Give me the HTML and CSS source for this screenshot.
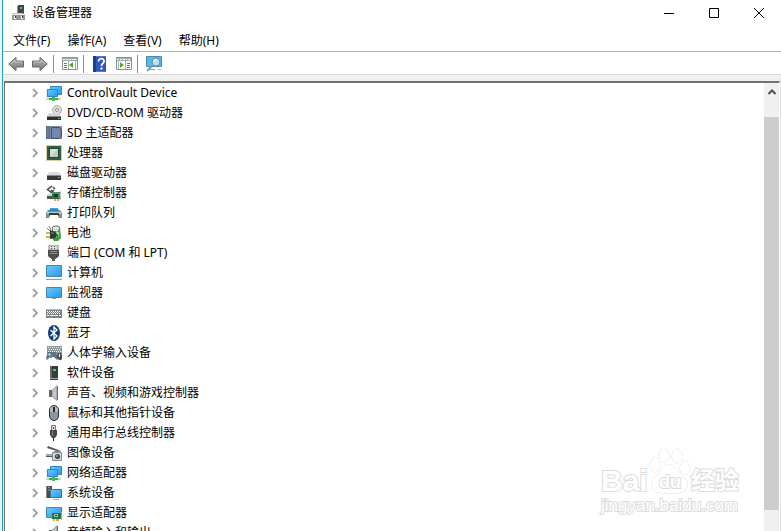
FILE: index.html
```html
<!DOCTYPE html>
<html lang="zh-CN">
<head>
    <meta charset="UTF-8">
    <meta name="viewport" content="width=device-width, initial-scale=1.0">
    <title>设备管理器</title>
    <link rel="stylesheet" href="styles.css">
</head>
<body>
    <!-- Device icons -->
    <svg class="sprite" aria-hidden="true">
        <defs>
            <linearGradient id="blue" x1="0" y1="0" x2="1" y2="1">
                <stop offset="0" stop-color="#6cc8fb"/>
                <stop offset="1" stop-color="#239af0"/>
            </linearGradient>
            <linearGradient id="arrow" x1="0" y1="0" x2="0" y2="1">
                <stop offset="0" stop-color="#b5b5b5"/>
                <stop offset="1" stop-color="#777"/>
            </linearGradient>
        </defs>
        <symbol id="network" viewBox="0 0 16 16">
            <path d="M4.500 1.500h11v8h-11z" fill="url(#blue)" stroke="#2f86c0"/>
            <path d="M.5 4.500h11v8H.5z" fill="url(#blue)" stroke="#e8f5ff"/>
            <path d="M1.500 4.500h10v7h-10z" fill="url(#blue)" stroke="#2f86c0"/>
            <path d="M0 13h15v2H0z" fill="#c4d6c4"/>
            <path d="M3 13h9v2H3z" fill="#36ad40"/>
            <path d="M6 12h3v4H6z" fill="#45b74c"/>
        </symbol>
        <symbol id="disc" viewBox="0 0 16 16">
            <circle cx="11" cy="5" r="4.500" fill="#ddd" stroke="#aaa"/>
            <circle cx="11" cy="5" r="1.500" fill="#fff" stroke="#888"/>
            <path d="M3 8h10l2 3H1z" fill="#d6d6d6"/>
            <path d="M1 11h14v4H1z" fill="#303030"/>
            <path d="M1 11h14v1H1z" fill="#888"/>
            <path d="M12 13h2v1h-2z" fill="#31d94b"/>
        </symbol>
        <symbol id="sd" viewBox="0 0 16 16">
            <path d="M0 1h16v13H0z" fill="#7c8daa"/>
            <path d="M0 1h4v13H0z" fill="#5c6c88"/>
            <path d="M1 3h2M1 5h2M1 7h2M1 9h2M1 11h2" stroke="#7d8ba5"/>
            <path d="M5.500 2.500h8l2 2v7l-2 2h-8z" fill="#6d82a7" stroke="#425370"/>
            <path d="M6 3h7v9H6z" fill="#7488ac"/>
        </symbol>
        <symbol id="cpu" viewBox="0 0 16 16">
            <path d="M.5.5h15v15H.5z" fill="#fff" stroke="#b59c48" stroke-dasharray="1 1"/>
            <path d="M1 1h14v14H1z" fill="#315f45"/>
            <path d="M3 3h10v10H3z" fill="#20472f"/>
            <path d="M4 4h8v8H4z" fill="#dcdedb"/>
            <path d="M4 12l8-8v8z" fill="#c3c8c2"/>
        </symbol>
        <symbol id="disk" viewBox="0 0 16 16">
            <path d="M3 7h10l2 4H1z" fill="#dadada"/>
            <path d="M1 10h14v5H1z" fill="#363636"/>
            <path d="M1 10h14v1H1z" fill="#898989"/>
            <path d="M12 12h2v1h-2z" fill="#2ed64b"/>
        </symbol>
        <symbol id="storage" viewBox="0 0 16 16">
            <path d="M6 1L1.500 4.500 6 8M7 2l2 2M5 5l3 3M8 5L6 7" fill="none" stroke="#444" stroke-width="1.500"/>
            <path d="M1 10l4-2 3 2v3H1z" fill="#d1d1d1"/>
            <path d="M1 11h6v3H1z" fill="#505050"/>
            <path d="M6 7h9v7H6z" fill="#247548"/>
            <path d="M8 9h4v3H8z" fill="#163625"/>
            <path d="M6 8h8M13 9v4" stroke="#70b989"/>
            <path d="M14.500 6v9" stroke="#b7b7b7"/>
            <path d="M8 14h2v2H8zM11 14h2v2h-2z" fill="#f0a22c"/>
        </symbol>
        <symbol id="printer" viewBox="0 0 16 16">
            <path d="M4 3h8l1 4H3z" fill="#41a9e2"/>
            <path d="M2 5h12l2 3v5H0V8z" fill="#858b8d"/>
            <path d="M1 7h14v2H1z" fill="#c4c8c9"/>
            <path d="M3 8h10v3H3z" fill="#343d42"/>
            <path d="M4 10h8l1 4H3z" fill="#fff"/>
            <path d="M4 4h8v2H4z" fill="#268bbf"/>
            <path d="M1 9h2v1H1z" fill="#44bb9b"/>
        </symbol>
        <symbol id="battery" viewBox="0 0 16 16">
            <path d="M6 3h8l1 10-3 3H8l-2-3z" fill="#399c3f"/>
            <ellipse cx="10" cy="3" rx="4" ry="2" fill="#eee" stroke="#666"/>
            <path d="M7 3h6l-1 3H7z" fill="#dedede"/>
            <path d="M10 6l3 1v6l-2 1z" fill="#8be486"/>
            <path d="M0 8h5M0 12h5" stroke="#c59c13" stroke-width="1.500"/>
            <path d="M4 5l5 2 2 3-2 3-5 1z" fill="#333"/>
            <path d="M5 7l3 1v1L5 8z" fill="#888"/>
            <path d="M10 10c3-1 2 3 1 4" fill="none" stroke="#333"/>
            <path d="M1 3l3 3M3 1l2 4" stroke="#777"/>
        </symbol>
        <symbol id="port" viewBox="0 0 16 16">
            <path d="M3 0h9v5H3z" fill="#ddd" stroke="#888"/>
            <path d="M5 1h1v1H5zM8 1h1v1H8zM5 3h1v1H5zM8 3h1v1H8z" fill="#555"/>
            <path d="M2 5h11v6l-2 2H4l-2-2z" fill="#4e4e4e"/>
            <path d="M4 6h7v1H4zM4 8h7v1H4z" fill="#8d8d8d"/>
            <path d="M5 12h5v2H9v2H6v-2H5z" fill="#555"/>
        </symbol>
        <symbol id="computer" viewBox="0 0 16 16">
            <path d="M.5.500h15v11H.5z" fill="url(#blue)" stroke="#4685ad"/>
            <path d="M0 13h16v1H0z" fill="#eef2f5"/>
            <path d="M0 14h16v1H0z" fill="#899eb2"/>
        </symbol>
        <symbol id="monitor" viewBox="0 0 16 16">
            <path d="M.5 2.500h15v10H.5z" fill="url(#blue)" stroke="#4685ad"/>
            <path d="M6 13h4v1H6z" fill="#8b9ca8"/>
        </symbol>
        <symbol id="keyboard" viewBox="0 0 16 16">
            <path d="M0 4h16v9H0z" fill="#7b8288"/>
            <path d="M0 4h16v1H0z" fill="#b6bdc2"/>
            <path d="M1 6.500h14M1 8.500h14" stroke="#fff" stroke-dasharray="1 1"/>
            <path d="M2 7.500h12" stroke="#c9ced2" stroke-dasharray="1 1"/>
            <path d="M1 10h2v1H1zM4 10h8v1H4zM13 10h2v1h-2z" fill="#fff"/>
        </symbol>
        <symbol id="bluetooth" viewBox="0 0 16 16">
            <ellipse cx="8" cy="8" rx="6" ry="8" fill="#123f79"/>
            <path d="M4.500 5l6.500 6-3 3V2l3 3-6.500 6" fill="none" stroke="#fff" stroke-width="1.300"/>
        </symbol>
        <symbol id="hid" viewBox="0 0 16 16">
            <path d="M1 1h15v8H1z" fill="#8d959b"/>
            <path d="M2 2.500h13M2 6.500h13" stroke="#eee" stroke-dasharray="1 1"/>
            <path d="M3 4.500h12" stroke="#fff" stroke-dasharray="1 1"/>
            <path d="M2 7h8l2 6-1 2-3-3H4l-3 3-1-2z" fill="#66727c"/>
            <circle cx="3.500" cy="9.500" r="1" fill="#fff"/>
            <path d="M4 10h2v3H4z" fill="#1a9be3"/>
            <path d="M12 8h3l1 2v4l-1 1h-2l-2-2v-3z" fill="#465059"/>
            <path d="M13.500 9v3" stroke="#fff"/>
        </symbol>
        <symbol id="software" viewBox="0 0 16 16">
            <path d="M4 1h8v14H4z" fill="#3a3a3a"/>
            <path d="M4 1h2v12H4z" fill="#666"/>
            <path d="M7 4h3v2H7z" fill="#35e433"/>
            <path d="M4 13h8v1H4z" fill="#aaa"/>
        </symbol>
        <symbol id="speaker" viewBox="0 0 16 16">
            <path d="M3 5h3v7H3z" fill="#64686c"/>
            <path d="M6 5l5-5v16l-5-4z" fill="#a6abb0"/>
            <path d="M7 6l3-3v10l-3-2z" fill="#c5c9cc"/>
            <path d="M11 1h1v14h-1z" fill="#686c70"/>
        </symbol>
        <symbol id="mouse" viewBox="0 0 16 16">
            <rect x="3.500" y=".5" width="9" height="15" rx="4.500" fill="#8b959f" stroke="#292e33"/>
            <path d="M4 7V5c0-5 8-5 8 0v2z" fill="#b5bbc1"/>
            <path d="M8 2v5" stroke="#23272b" stroke-width="2"/>
        </symbol>
        <symbol id="usb" viewBox="0 0 16 16">
            <path d="M5.500.500h4v5h-4z" fill="#ddd" stroke="#777"/>
            <path d="M7 2h1v2H7z" fill="#555"/>
            <path d="M4 5h7v5l-2 3H6l-2-3z" fill="#454545"/>
            <path d="M6 6h1v5H6z" fill="#888"/>
            <path d="M7 12h1v4H7z" fill="#333"/>
        </symbol>
        <symbol id="imaging" viewBox="0 0 16 16">
            <path d="M2 1l13 5-1 1L1 3z" fill="#555"/>
            <path d="M14 6L6 9" stroke="#aaa"/>
            <path d="M0 9h7v3H0z" fill="#aaa"/>
            <path d="M0 11h7v1H0z" fill="#555"/>
            <path d="M6.500 7.500h9v8h-9z" fill="#d6d6d6" stroke="#888"/>
            <path d="M8 6h5v2H8z" fill="#888"/>
            <circle cx="11.500" cy="11.500" r="2.500" fill="#294454"/>
            <circle cx="11" cy="11" r="1" fill="#87aec5"/>
        </symbol>
        <symbol id="system" viewBox="0 0 16 16">
            <path d="M1 1h5v12H1z" fill="#4c4c4c"/>
            <path d="M0 1h1v12H0z" fill="#888"/>
            <path d="M2 2h2v1H2z" fill="#40dc49"/>
            <path d="M2 5h4" stroke="#999"/>
            <path d="M4.500 4.500h11v8h-11z" fill="url(#blue)" stroke="#3d7299"/>
            <path d="M7 14h6v1H7z" fill="#aab8c2"/>
        </symbol>
        <symbol id="display" viewBox="0 0 16 16">
            <path d="M.5 2.500h15v10H.5z" fill="url(#blue)" stroke="#4685ad"/>
            <path d="M6 8h9v6H6z" fill="#267247"/>
            <path d="M8 9h4v3H8z" fill="#9fc5aa"/>
            <path d="M9 10h2v1H9z" fill="#173b26"/>
            <path d="M7 14h2v2H7zM10 14h3v2h-3z" fill="#eaa52d"/>
            <path d="M15.500 7v8" stroke="#aaa"/>
        </symbol>
        <symbol id="chevron" viewBox="0 0 8 10">
            <path d="M2 1l4 4-4 4" fill="none" stroke="#a0a0a0" stroke-width="1.800"/>
        </symbol>
    </svg>

    <div class="window">
        <header class="titlebar">
            <svg class="app-icon" viewBox="0 0 16 16" aria-hidden="true">
                <path d="M7 0h6v11H7z" fill="#454545"/>
                <path d="M6 1h1v9H6z" fill="#999"/>
                <path d="M9 2h2v2H9z" fill="#35d84c"/>
                <path d="M2 8h10l2 2v5H1v-5z" fill="#c4c4c4"/>
                <path d="M1 10h13v5H1z" fill="#949494"/>
                <path d="M2 9h11v1H2z" fill="#eee"/>
                <path d="M3 11h2v3H3zM10 11h2v3h-2z" fill="#fff"/>
                <path d="M4 11h1v2H4zM11 11h1v2h-1z" fill="#333"/>
            </svg>
            <h1>设备管理器</h1>
            <div class="window-controls">
                <button type="button" aria-label="最小化">
                    <svg viewBox="0 0 10 10"><path d="M0 5.500h10"/></svg>
                </button>
                <button type="button" aria-label="最大化">
                    <svg viewBox="0 0 10 10"><path d="M.5.500h9v9h-9z"/></svg>
                </button>
                <button type="button" aria-label="关闭">
                    <svg viewBox="0 0 10 10"><path d="M0 0l10 10M10 0L0 10"/></svg>
                </button>
            </div>
        </header>

        <nav class="menubar">
            <button type="button">文件(F)</button>
            <button type="button">操作(A)</button>
            <button type="button">查看(V)</button>
            <button type="button">帮助(H)</button>
        </nav>

        <div class="toolbar">
            <button type="button" aria-label="后退">
                <svg viewBox="0 0 16 16"><path d="M.7 8L8 1.500V5h7.500v6H8v3.500z" fill="url(#arrow)" stroke="#686868"/><path d="M3 8l4-4v2h7" fill="none" stroke="#c5c5c5"/></svg>
            </button>
            <button type="button" aria-label="前进">
                <svg viewBox="0 0 16 16"><path d="M15.300 8L8 1.500V5H.5v6H8v3.500z" fill="url(#arrow)" stroke="#686868"/><path d="M2 6h7V4l4 4" fill="none" stroke="#c5c5c5"/></svg>
            </button>
            <span class="separator"></span>
            <button type="button" aria-label="显示/隐藏控制台树">
                <svg viewBox="0 0 16 16">
                    <path d="M.5 1.500h15v12H.5z" fill="#fff" stroke="#8b9299"/>
                    <path d="M1 2h14v3H1z" fill="#a2a9af"/>
                    <path d="M1 3.500h10M12 3.500h3" stroke="#fff" stroke-dasharray="2 1"/>
                    <path d="M2 7.500h3M2 9.500h3M2 11.500h3" stroke="#687c91"/>
                    <path d="M6.500 5v8M13.500 5v8" stroke="#a9aeb2"/>
                    <path d="M11 6v6l-4-3z" fill="#49ad25"/>
                </svg>
            </button>
            <span class="separator"></span>
            <button type="button" aria-label="帮助">
                <svg viewBox="0 0 16 16">
                    <path d="M1 0h13v16H1z" fill="#3157bd"/>
                    <path d="M1 0h3v16H1z" fill="#203a96"/>
                    <path d="M4 0h10v1H4zM4 15h10v1H4z" fill="#5478d4"/>
                    <path d="M6.500 5.500c0-4 6-3.500 5.500 0-.3 2-2.500 2-2.500 4.500" fill="none" stroke="#fff" stroke-width="1.800"/>
                    <path d="M8.500 11.500h2v2h-2z" fill="#fff"/>
                </svg>
            </button>
            <button type="button" aria-label="显示/隐藏操作窗格">
                <svg viewBox="0 0 16 16">
                    <path d="M.5 1.500h15v12H.5z" fill="#fff" stroke="#8b9299"/>
                    <path d="M1 2h14v3H1z" fill="#a2a9af"/>
                    <path d="M1 3.500h10M12 3.500h3" stroke="#fff" stroke-dasharray="2 1"/>
                    <path d="M11 7.500h3M11 9.500h3M11 11.500h3" stroke="#507caa"/>
                    <path d="M2.500 5v8M9.500 5v8" stroke="#a9aeb2"/>
                    <path d="M4 6v6l4-3z" fill="#49ad25"/>
                </svg>
            </button>
            <span class="separator"></span>
            <button type="button" aria-label="扫描检测硬件改动">
                <svg viewBox="0 0 16 16">
                    <path d="M.5.500h15v10H.5z" fill="#55bce9" stroke="#448bb0"/>
                    <path d="M4 13h5v1H4z" fill="#889caa"/>
                    <path d="M7 9l-6 6" stroke="#7e9db1" stroke-width="2"/>
                    <circle cx="10" cy="6" r="4" fill="#b5e2f4" stroke="#6b8b9d"/>
                    <path d="M8 5l2-2" stroke="#fff"/>
                    <path d="M12 13h3v1h-3z" fill="#b4bdc3"/>
                </svg>
            </button>
        </div>

        <main class="content">
            <ul class="tree">
                <li><button type="button" aria-label="展开"><svg><use href="#chevron"/></svg></button><svg class="icon"><use href="#network"/></svg><span>ControlVault Device</span></li>
                <li><button type="button" aria-label="展开"><svg><use href="#chevron"/></svg></button><svg class="icon"><use href="#disc"/></svg><span>DVD/CD-ROM 驱动器</span></li>
                <li><button type="button" aria-label="展开"><svg><use href="#chevron"/></svg></button><svg class="icon"><use href="#sd"/></svg><span>SD 主适配器</span></li>
                <li><button type="button" aria-label="展开"><svg><use href="#chevron"/></svg></button><svg class="icon"><use href="#cpu"/></svg><span>处理器</span></li>
                <li><button type="button" aria-label="展开"><svg><use href="#chevron"/></svg></button><svg class="icon"><use href="#disk"/></svg><span>磁盘驱动器</span></li>
                <li><button type="button" aria-label="展开"><svg><use href="#chevron"/></svg></button><svg class="icon"><use href="#storage"/></svg><span>存储控制器</span></li>
                <li><button type="button" aria-label="展开"><svg><use href="#chevron"/></svg></button><svg class="icon"><use href="#printer"/></svg><span>打印队列</span></li>
                <li><button type="button" aria-label="展开"><svg><use href="#chevron"/></svg></button><svg class="icon"><use href="#battery"/></svg><span>电池</span></li>
                <li><button type="button" aria-label="展开"><svg><use href="#chevron"/></svg></button><svg class="icon"><use href="#port"/></svg><span>端口 (COM 和 LPT)</span></li>
                <li><button type="button" aria-label="展开"><svg><use href="#chevron"/></svg></button><svg class="icon"><use href="#computer"/></svg><span>计算机</span></li>
                <li><button type="button" aria-label="展开"><svg><use href="#chevron"/></svg></button><svg class="icon"><use href="#monitor"/></svg><span>监视器</span></li>
                <li><button type="button" aria-label="展开"><svg><use href="#chevron"/></svg></button><svg class="icon"><use href="#keyboard"/></svg><span>键盘</span></li>
                <li><button type="button" aria-label="展开"><svg><use href="#chevron"/></svg></button><svg class="icon"><use href="#bluetooth"/></svg><span>蓝牙</span></li>
                <li><button type="button" aria-label="展开"><svg><use href="#chevron"/></svg></button><svg class="icon"><use href="#hid"/></svg><span>人体学输入设备</span></li>
                <li><button type="button" aria-label="展开"><svg><use href="#chevron"/></svg></button><svg class="icon"><use href="#software"/></svg><span>软件设备</span></li>
                <li><button type="button" aria-label="展开"><svg><use href="#chevron"/></svg></button><svg class="icon"><use href="#speaker"/></svg><span>声音、视频和游戏控制器</span></li>
                <li><button type="button" aria-label="展开"><svg><use href="#chevron"/></svg></button><svg class="icon"><use href="#mouse"/></svg><span>鼠标和其他指针设备</span></li>
                <li><button type="button" aria-label="展开"><svg><use href="#chevron"/></svg></button><svg class="icon"><use href="#usb"/></svg><span>通用串行总线控制器</span></li>
                <li><button type="button" aria-label="展开"><svg><use href="#chevron"/></svg></button><svg class="icon"><use href="#imaging"/></svg><span>图像设备</span></li>
                <li><button type="button" aria-label="展开"><svg><use href="#chevron"/></svg></button><svg class="icon"><use href="#network"/></svg><span>网络适配器</span></li>
                <li><button type="button" aria-label="展开"><svg><use href="#chevron"/></svg></button><svg class="icon"><use href="#system"/></svg><span>系统设备</span></li>
                <li><button type="button" aria-label="展开"><svg><use href="#chevron"/></svg></button><svg class="icon"><use href="#display"/></svg><span>显示适配器</span></li>
                <li><button type="button" aria-label="展开"><svg><use href="#chevron"/></svg></button><svg class="icon"><use href="#speaker"/></svg><span>音频输入和输出</span></li>
            </ul>
            <div class="scrollbar">
                <button type="button" aria-label="向上滚动">
                    <svg viewBox="0 0 8 6"><path d="M.5 5L4 1.500 7.500 5" fill="none" stroke="#505050" stroke-width="2"/></svg>
                </button>
                <div class="thumb"></div>
            </div>
        </main>
    </div>

    <div class="watermark">
        <div class="brand">
            <span class="latin">Bai</span>
            <span class="paw">
                <svg viewBox="0 0 42 48" aria-hidden="true">
                    <ellipse cx="6" cy="19" rx="5" ry="7"/>
                    <ellipse cx="15" cy="9" rx="5" ry="7"/>
                    <ellipse cx="28" cy="10" rx="5" ry="7"/>
                    <ellipse cx="36" cy="22" rx="5" ry="7"/>
                    <path d="M20 19c6 0 8 5 11 9 4 4 8 7 7 12-1 8-9 7-17 7S4 48 3 40c-1-6 3-9 7-12 3-4 4-9 10-9z"/>
                </svg>
                <span class="du">du</span>
            </span>
            <span class="chinese">经验</span>
        </div>
        <div class="site">jingyan.baidu.com</div>
    </div>
</body>
</html>
```

FILE: styles.css
```css
* {
    box-sizing: border-box;
}

body {
    margin: 0;
    height: 100vh;
    overflow: hidden;
    background-color: #f0f0f0;
    color: #000;
    font-family: "Noto Sans", "Noto Sans CJK SC", sans-serif;
    font-size: 12px;
    line-height: 20px;
}

button {
    display: flex;
    align-items: center;
    justify-content: center;
    padding: 0;
    border: none;
    background: none;
    color: inherit;
    font: inherit;
}

svg {
    display: block;
}

.sprite {
    position: absolute;
    width: 0;
    height: 0;
}

.window {
    display: flex;
    flex-direction: column;
    height: 100%;
    margin-left: 2px;
    border-left: 1px solid #18a5bd;
    background-color: #fff;
}

/* Title bar */
.titlebar {
    display: flex;
    align-items: center;
    height: 25px;
    padding-left: 8px;
}

.app-icon {
    width: 16px;
    height: 16px;
}

h1 {
    margin: 0 0 0 5px;
    font-size: 12px;
    font-weight: normal;
}

.window-controls {
    display: flex;
    margin-left: auto;
}

.window-controls button {
    width: 45px;
    height: 25px;
}

.window-controls svg {
    width: 10px;
    height: 10px;
    fill: none;
    stroke: #000;
}

/* Menu and toolbar */
.menubar {
    display: flex;
    gap: 17px;
    height: 27px;
    padding: 6px 10px 0;
    border-bottom: 1px solid #b0b2b7;
}

.menubar button {
    height: 20px;
}

.toolbar {
    display: flex;
    align-items: center;
    height: 23px;
    padding: 2px 0 0 1px;
    border-bottom: 1px solid #d9d9d9;
}

.toolbar button {
    width: 24px;
    height: 20px;
}

.toolbar svg {
    width: 16px;
    height: 16px;
}

.separator {
    width: 1px;
    height: 18px;
    margin: 0 4px 0 1px;
    background-color: #8c8c8c;
}

/* Device tree */
.content {
    display: flex;
    flex: 1;
    min-height: 0;
    border-top: 6px solid #f0f0f0;
    border-right: 1px solid #e3e3e3;
    border-left: 1px solid #f0f0f0;
}

.tree {
    flex: 1;
    margin: 0;
    padding: 0 0 0 22px;
    overflow: hidden;
    border-top: 2px solid #727272;
    border-left: 1px solid #727272;
    list-style: none;
}

.tree li {
    display: flex;
    align-items: center;
    height: 20px;
    white-space: nowrap;
}

.tree button {
    width: 16px;
    height: 20px;
}

.tree button svg {
    width: 8px;
    height: 10px;
}

.icon {
    width: 16px;
    height: 16px;
    margin: 0 5px 0 3px;
}

/* Scrollbar */
.scrollbar {
    display: flex;
    flex-direction: column;
    width: 16px;
    border-top: 2px solid #727272;
    border-right: 1px solid #fff;
    background-color: #f0f0f0;
}

.scrollbar button {
    height: 18px;
}

.scrollbar button svg {
    width: 8px;
    height: 6px;
}

.thumb {
    flex: 1;
    margin: 16px 0 21px;
    background-color: #cdcdcd;
}

/* Watermark over the tree */
.watermark {
    position: absolute;
    right: 42px;
    bottom: 16px;
    color: #fff;
    font-family: "Liberation Sans", "Noto Sans CJK SC", sans-serif;
    -webkit-text-stroke: 2px #dcdcdc;
    paint-order: stroke fill;
}

.brand {
    display: flex;
    align-items: flex-end;
    margin-bottom: 3px;
}

.latin {
    width: 48px;
    font-size: 30px;
    font-weight: bold;
    line-height: 26px;
}

.paw {
    display: grid;
    place-items: end center;
    width: 42px;
    height: 48px;
}

.paw svg,
.du {
    grid-area: 1 / 1;
}

.paw svg {
    width: 42px;
    height: 48px;
    fill: #fff;
    stroke: #dcdcdc;
}

.du {
    font-size: 18px;
    font-weight: bold;
    line-height: 24px;
}

.chinese {
    font-size: 24px;
    font-weight: bold;
    line-height: 26px;
}

.site {
    font-size: 17px;
    line-height: 18px;
}
```
